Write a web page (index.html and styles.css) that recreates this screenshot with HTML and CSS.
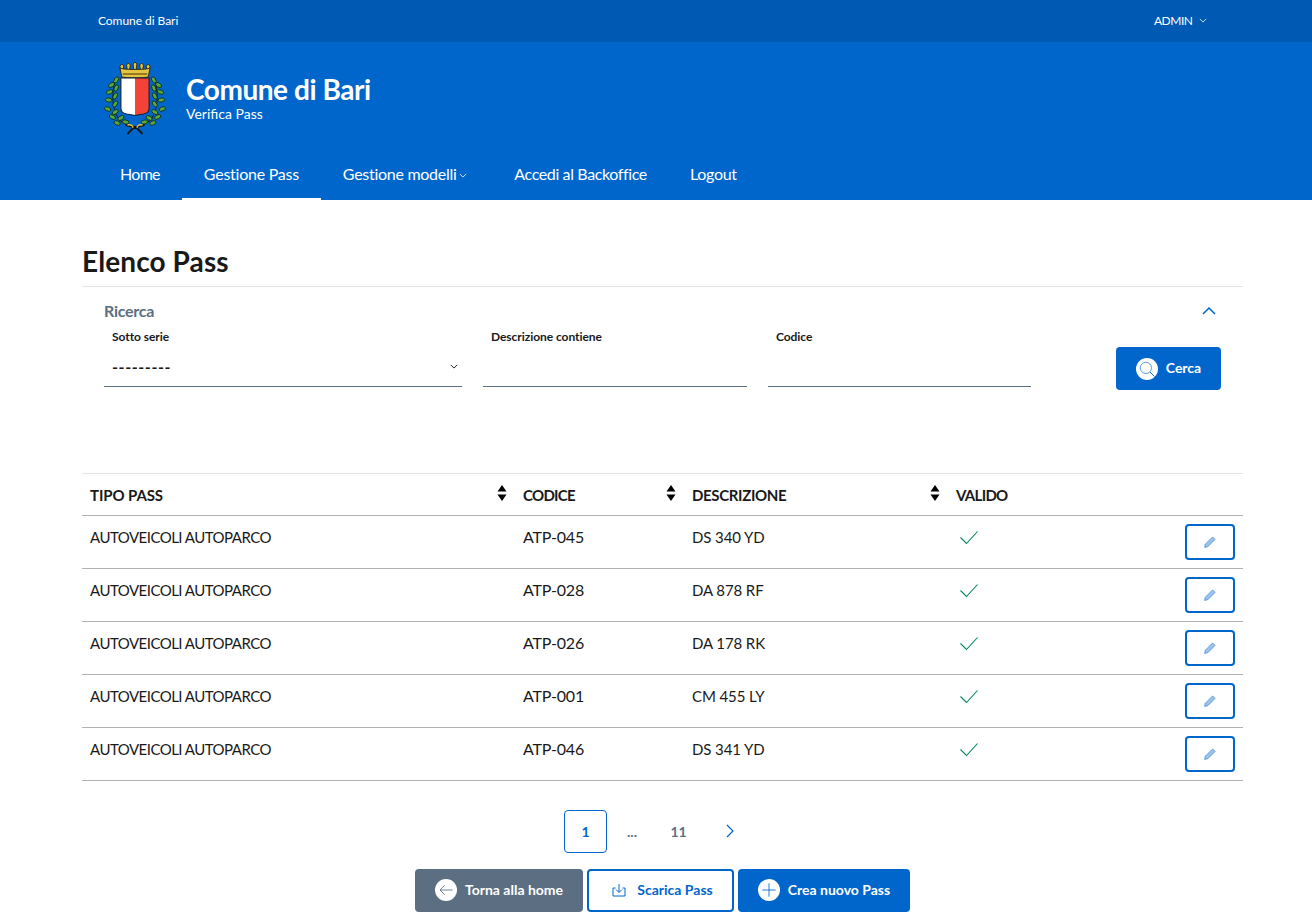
FILE: index.html
```html
<!DOCTYPE html>
<html lang="it">
<head>
<meta charset="utf-8">
<title>Elenco Pass - Comune di Bari</title>
<link rel="stylesheet" href="styles.css">
</head>
<body>
<div class="topbar">
  <span class="topbar-name">Comune di Bari</span>
  <span class="topbar-user">ADMIN <svg class="chev-small" viewBox="0 0 10 6"><path d="M1 1l4 4 4-4"/></svg></span>
</div>
<header class="header">
  <div class="brand">
    <svg class="crest" viewBox="-2 0 68 74" preserveAspectRatio="none">
      <g fill="#e3c443" stroke="#2a2208" stroke-width=".9">
        <path d="M18 2l2 2-1 6h-2l-1-6zM25 1l2 2-1 6h-2l-1-6zM32 0l2 2-1 7h-2l-1-7zM39 1l2 2-1 6h-2l-1-6zM46 2l2 2-1 6h-2l-1-6z"/>
        <path d="M16 6c3 2 29 2 32 0l-2 9c-6 1-22 1-28 0z"/>
      </g>
      <path d="M19 12h26" stroke="#7d6512" stroke-width="1.500"/>
      <path d="M17 16h15v37l-9-1c-4-1-6-2-6-6z" fill="#fff"/>
      <path d="M32 16h15v30c0 4-2 5-6 6l-9 1z" fill="#f44336"/>
      <path d="M17 16h30v30c0 4-2 5-6 6l-9 1.500-9-1.500c-4-1-6-2-6-6z" fill="none" stroke="#14233a" stroke-width="1.200"/>
      <path d="M11 16c-3 14-5 28 4 42l12 7M53 16c3 14 5 28-4 42l-12 7" fill="none" stroke="#10240f" stroke-width="1"/>
      <g fill="#58a83e" stroke="#10240f" stroke-width=".8">
        <ellipse cx="12" cy="18" rx="3.500" ry="2" transform="rotate(-55 12 18)"/>
        <ellipse cx="7" cy="23" rx="3.500" ry="2" transform="rotate(-30 7 23)"/>
        <ellipse cx="12" cy="26" rx="3.500" ry="2" transform="rotate(-65 12 26)"/>
        <ellipse cx="5" cy="30" rx="3.500" ry="2" transform="rotate(-20 5 30)"/>
        <ellipse cx="11" cy="34" rx="3.500" ry="2" transform="rotate(-60 11 34)"/>
        <ellipse cx="4" cy="38" rx="3.500" ry="2" transform="rotate(10 4 38)"/>
        <ellipse cx="11" cy="42" rx="3.500" ry="2" transform="rotate(-50 11 42)"/>
        <ellipse cx="3" cy="47" rx="3.500" ry="2" transform="rotate(20 3 47)"/>
        <ellipse cx="11" cy="50" rx="3.500" ry="2" transform="rotate(-30 11 50)"/>
        <ellipse cx="8" cy="55" rx="3.500" ry="2" transform="rotate(25 8 55)"/>
        <ellipse cx="17" cy="56" rx="3.500" ry="2" transform="rotate(-25 17 56)"/>
        <ellipse cx="13" cy="61" rx="3.500" ry="2" transform="rotate(20 13 61)"/>
        <ellipse cx="22" cy="60" rx="3.500" ry="2" transform="rotate(10 22 60)"/>
        <ellipse cx="52" cy="18" rx="3.500" ry="2" transform="rotate(55 52 18)"/>
        <ellipse cx="57" cy="23" rx="3.500" ry="2" transform="rotate(30 57 23)"/>
        <ellipse cx="52" cy="26" rx="3.500" ry="2" transform="rotate(65 52 26)"/>
        <ellipse cx="59" cy="30" rx="3.500" ry="2" transform="rotate(20 59 30)"/>
        <ellipse cx="53" cy="34" rx="3.500" ry="2" transform="rotate(60 53 34)"/>
        <ellipse cx="60" cy="38" rx="3.500" ry="2" transform="rotate(-10 60 38)"/>
        <ellipse cx="53" cy="42" rx="3.500" ry="2" transform="rotate(50 53 42)"/>
        <ellipse cx="61" cy="47" rx="3.500" ry="2" transform="rotate(-20 61 47)"/>
        <ellipse cx="53" cy="50" rx="3.500" ry="2" transform="rotate(30 53 50)"/>
        <ellipse cx="56" cy="55" rx="3.500" ry="2" transform="rotate(-25 56 55)"/>
        <ellipse cx="47" cy="56" rx="3.500" ry="2" transform="rotate(25 47 56)"/>
        <ellipse cx="51" cy="61" rx="3.500" ry="2" transform="rotate(-20 51 61)"/>
        <ellipse cx="42" cy="60" rx="3.500" ry="2" transform="rotate(-10 42 60)"/>
      </g>
      <path d="M22 63l9 2-7 7M42 63l-9 2 7 7" fill="none" stroke="#1a1a12" stroke-width="2"/>
      <path d="M24 63c4-1 6 1 6 3M40 63c-4-1-6 1-6 3" fill="none" stroke="#e3c443" stroke-width="1.500"/>
      <circle cx="32" cy="65.500" r="1.500" fill="#111"/>
    </svg>
    <div class="brand-text">
      <div class="brand-title">Comune di Bari</div>
      <div class="brand-sub">Verifica Pass</div>
    </div>
  </div>
  <nav class="nav">
    <a class="nav-item nav-home">Home</a>
    <a class="nav-item nav-pass is-active">Gestione Pass</a>
    <a class="nav-item nav-drop">Gestione modelli <svg class="chev-small" viewBox="0 0 10 6"><path d="M1 1l4 4 4-4"/></svg></a>
    <a class="nav-item nav-back">Accedi al Backoffice</a>
    <a class="nav-item">Logout</a>
  </nav>
</header>
<main class="main">
  <h1 class="title">Elenco Pass</h1>
  <section class="search">
    <div class="search-head">
      <span class="search-label">Ricerca</span>
      <svg class="chev-up" viewBox="0 0 14 8"><path d="M1 7l6-6 6 6"/></svg>
    </div>
    <div class="filters">
      <div class="field">
        <label class="field-label">Sotto serie</label>
        <div class="field-box select-box"><span class="select-value">---------</span>
          <svg class="select-chev" viewBox="0 0 10 6"><path d="M1 1l4 4 4-4"/></svg></div>
      </div>
      <div class="field">
        <label class="field-label">Descrizione contiene</label>
        <div class="field-box"></div>
      </div>
      <div class="field">
        <label class="field-label">Codice</label>
        <div class="field-box"></div>
      </div>
      <button class="btn btn-primary btn-search">
        <span class="btn-disc"><svg viewBox="0 0 24 24" class="disc-icon"><circle cx="10.500" cy="10.500" r="7.500" /><path class="lens-handle" d="M16 16l6 6"/></svg></span><span class="btn-text">Cerca</span>
      </button>
    </div>
  </section>
  <table class="table">
    <thead>
      <tr>
        <th class="col-tipo"><span class="th-in">TIPO PASS<svg class="sort" viewBox="0 0 10 16"><path d="M5 0l4.500 6.500h-9zM5 16l4.500-6.500h-9z"/></svg></span></th>
        <th class="col-cod"><span class="th-in">CODICE<svg class="sort" viewBox="0 0 10 16"><path d="M5 0l4.500 6.500h-9zM5 16l4.500-6.500h-9z"/></svg></span></th>
        <th class="col-desc"><span class="th-in">DESCRIZIONE<svg class="sort" viewBox="0 0 10 16"><path d="M5 0l4.500 6.500h-9zM5 16l4.500-6.500h-9z"/></svg></span></th>
        <th class="col-val">VALIDO</th>
        <th class="col-act"></th>
      </tr>
    </thead>
    <tbody>
      <tr><td>AUTOVEICOLI AUTOPARCO</td><td>ATP-045</td><td>DS 340 YD</td><td><svg class="check" viewBox="0 0 18 14"><path d="M.5 6.500l6 6L17.500.5"/></svg></td><td class="cell-act"><button class="btn-edit"><svg class="pencil" viewBox="0 0 12 12"><path d="M8.600.9l2.500 2.500-7.300 7.300-3.200.7.700-3.200z"/></svg></button></td></tr>
      <tr><td>AUTOVEICOLI AUTOPARCO</td><td>ATP-028</td><td>DA 878 RF</td><td><svg class="check" viewBox="0 0 18 14"><path d="M.5 6.500l6 6L17.500.5"/></svg></td><td class="cell-act"><button class="btn-edit"><svg class="pencil" viewBox="0 0 12 12"><path d="M8.600.9l2.500 2.500-7.300 7.300-3.200.7.700-3.200z"/></svg></button></td></tr>
      <tr><td>AUTOVEICOLI AUTOPARCO</td><td>ATP-026</td><td>DA 178 RK</td><td><svg class="check" viewBox="0 0 18 14"><path d="M.5 6.500l6 6L17.500.5"/></svg></td><td class="cell-act"><button class="btn-edit"><svg class="pencil" viewBox="0 0 12 12"><path d="M8.600.9l2.500 2.500-7.300 7.300-3.200.7.700-3.200z"/></svg></button></td></tr>
      <tr><td>AUTOVEICOLI AUTOPARCO</td><td>ATP-001</td><td>CM 455 LY</td><td><svg class="check" viewBox="0 0 18 14"><path d="M.5 6.500l6 6L17.500.5"/></svg></td><td class="cell-act"><button class="btn-edit"><svg class="pencil" viewBox="0 0 12 12"><path d="M8.600.9l2.500 2.500-7.300 7.300-3.200.7.700-3.200z"/></svg></button></td></tr>
      <tr><td>AUTOVEICOLI AUTOPARCO</td><td>ATP-046</td><td>DS 341 YD</td><td><svg class="check" viewBox="0 0 18 14"><path d="M.5 6.500l6 6L17.500.5"/></svg></td><td class="cell-act"><button class="btn-edit"><svg class="pencil" viewBox="0 0 12 12"><path d="M8.600.9l2.500 2.500-7.300 7.300-3.200.7.700-3.200z"/></svg></button></td></tr>
    </tbody>
  </table>
  <div class="pager">
    <span class="page page-current">1</span>
    <span class="page page-dots">...</span>
    <span class="page">11</span>
    <span class="page page-next"><svg viewBox="0 0 8 14"><path d="M1 1l6 6-6 6"/></svg></span>
  </div>
  <div class="actions">
    <button class="btn btn-grey"><span class="btn-disc"><svg viewBox="0 0 24 24" class="disc-icon"><path d="M22 12H3M10 5l-7 7 7 7"/></svg></span><span class="btn-text">Torna alla home</span></button>
    <button class="btn btn-outline"><svg class="dl" viewBox="0 0 14 14"><path d="M7 1v8M4 6.500L7 9.500l3-3M3.500 5H1v8h12V5h-2.500"/></svg><span class="btn-text">Scarica Pass</span></button>
    <button class="btn btn-primary"><span class="btn-disc"><svg viewBox="0 0 24 24" class="disc-icon"><path d="M12 2v20M2 12h20"/></svg></span><span class="btn-text">Crea nuovo Pass</span></button>
  </div>
</main>
</body>
</html>
```
FILE: styles.css
```css
* { box-sizing: border-box; }
html, body { margin: 0; padding: 0; }
body {
  font-family: "Lato", "Noto Sans", sans-serif;
  color: #19191a;
  background: #fff;
  height: 913px;
  overflow: hidden;
}
.chev-small { width: 8px; height: 5px; fill: none; stroke: #fff; stroke-width: 1; margin-left: 2px; vertical-align: 2px; }

.topbar {
  height: 42px;
  background: #0059b3;
  color: #fff;
  font-size: 12px;
  display: flex;
  align-items: center;
  justify-content: space-between;
  padding: 0 105px 2px 98px;
}
.topbar-name { letter-spacing: -.05px; }
.topbar-user { letter-spacing: -.5px; }
.topbar-user .chev-small { margin-left: 4px; }

.header { height: 158px; background: #0066cc; color: #fff; display: flex; flex-direction: column; }
.brand { height: 110px; padding: 20px 0 0 103px; display: flex; align-items: flex-start; }
.crest { width: 64px; height: 74px; flex: none; }
.brand-text { margin: 11px 0 0 19px; }
.brand-title { font-size: 28px; line-height: 33px; font-weight: 700; letter-spacing: -.45px; }
.brand-sub { font-size: 14px; line-height: 16px; }
.nav { display: flex; height: 48px; padding-left: 98px; }
.nav-item { padding: 0 22px; font-size: 16px; line-height: 44px; letter-spacing: -.28px; color: #fff; height: 48px; white-space: nowrap; }
.nav-item.is-active { border-bottom: 2px solid #fff; }
.nav-home { letter-spacing: -.7px; }
.nav-pass { letter-spacing: -.25px; }
.nav-drop { padding-right: 25px; }
.nav-drop .chev-small { margin-left: -1px; }
.nav-back { letter-spacing: -.38px; padding-right: 21px; }

.main { padding: 0 69px 0 82px; }
.title { margin: 0; height: 87px; padding-top: 44px; font-size: 28px; line-height: 34px; font-weight: 700; letter-spacing: .1px; border-bottom: 1px solid #e5e5e5; }

.search { height: 187px; padding: 12px 22px 0; border-bottom: 1px solid #e5e5e5; }
.search-head { display: flex; justify-content: space-between; align-items: center; height: 24px; padding-right: 5px; }
.search-label { font-size: 16px; font-weight: 700; letter-spacing: -.25px; color: #5c6f82; margin-top: -1px; }
.chev-up { width: 14px; height: 8px; fill: none; stroke: #0066cc; stroke-width: 1.5; }
.filters { display: flex; align-items: flex-start; padding-top: 6px; }
.field { margin-right: 21px; }
.field:nth-child(1) { width: 358px; }
.field:nth-child(2) { width: 264px; }
.field:nth-child(3) { width: 263px; margin-right: 85px; }
.field-label { display: block; font-size: 12px; line-height: 16px; font-weight: 700; letter-spacing: -.05px; padding-left: 8px; color: #19191a; height: 20px; }
.field-box { height: 38px; border-bottom: 1px solid #5c6f82; display: flex; align-items: center; justify-content: space-between; padding: 0 4px 2px 8px; }
.select-value { font-size: 16px; font-weight: 700; letter-spacing: .6px; color: #19191a; }
.select-chev { width: 8px; height: 5px; fill: none; stroke: #19191a; stroke-width: 1.2; }

.btn {
  font-family: inherit;
  font-size: 14px;
  font-weight: 700;
  height: 43px;
  border-radius: 4px;
  border: 0;
  display: inline-flex;
  align-items: center;
  justify-content: center;
  padding: 0;
  white-space: nowrap;
}
.btn-text { margin-top: -2px; }
.btn-primary { background: #0066cc; color: #fff; }
.btn-grey { background: #5c6f82; color: #fff; }
.btn-outline { background: #fff; color: #0066cc; border: 2px solid #0066cc; padding-left: 4px; }
.btn-search { width: 105px; margin-top: 18px; }
.btn-disc { width: 22px; height: 22px; border-radius: 50%; background: #fff; margin-right: 8px; display: flex; align-items: center; justify-content: center; }
.disc-icon { width: 16px; height: 16px; fill: none; stroke: #0066cc; stroke-width: 1.3; }
.btn-search .disc-icon { width: 18px; height: 18px; stroke: #5a9be0; }
.btn-search .lens-handle { stroke: #0066cc; }
.btn-grey .disc-icon { stroke: #5c6f82; }

.table { width: 1161px; border-collapse: collapse; table-layout: fixed; }
.table th { height: 41px; padding: 2px 8px 0; font-size: 15px; font-weight: 700; letter-spacing: -.35px; text-align: left; border-bottom: 1px solid #b1b1b3; }
.table th.col-tipo { letter-spacing: -.1px; }
.table th.col-cod, .table th.col-val { letter-spacing: -.7px; }
.th-in { display: flex; justify-content: space-between; align-items: center; }
.sort { width: 10px; height: 16px; fill: #000; margin-top: -5px; }
.col-tipo { width: 433px; }
.col-cod { width: 169px; }
.col-desc { width: 264px; }
.col-val { width: 100px; }
.table td { height: 53px; padding: 0 8px 10px; font-size: 15px; font-weight: 400; color: #19191a; border-bottom: 1px solid #b1b1b3; }
.table td:nth-child(1) { letter-spacing: -.52px; }
.table td:nth-child(2) { font-size: 16px; letter-spacing: -.15px; }
.table td:nth-child(3) { letter-spacing: -.1px; }
.check { width: 18px; height: 14px; fill: none; stroke: #008758; stroke-width: 1.1; margin: 3px 0 0 4px; display: block; }
.cell-act { text-align: right; }
.table td.cell-act { padding: 0 8px; vertical-align: middle; }
.btn-edit { width: 50px; height: 36px; background: #fff; border: 2px solid #0066cc; border-radius: 4px; padding: 0; display: inline-flex; align-items: center; justify-content: center; vertical-align: middle; }
.pencil { width: 12px; height: 12px; fill: #9cc3ec; stroke: #3f86d6; stroke-width: .7; }

.pager { display: flex; justify-content: center; align-items: center; margin-top: 29px; height: 43px; font-size: 14px; font-weight: 700; color: #5c6f82; padding-right: 10px; }
.page { width: 43px; height: 43px; display: flex; align-items: center; justify-content: center; margin-right: 8px; }
.page-current { border: 1px solid #0066cc; border-radius: 4px; color: #0066cc; }
.page-dots { width: 34px; }
.page-next svg { width: 8px; height: 14px; fill: none; stroke: #0066cc; stroke-width: 1.2; }
.page-next { margin-right: 0; }

.actions { display: flex; justify-content: center; gap: 4px; margin-top: 16px; }
.actions .btn-grey { width: 168px; }
.actions .btn-outline { width: 147px; }
.actions .btn-primary { width: 172px; }
.dl { width: 14px; height: 14px; fill: none; stroke: #0066cc; stroke-width: 1; margin-right: 11px; }
```
